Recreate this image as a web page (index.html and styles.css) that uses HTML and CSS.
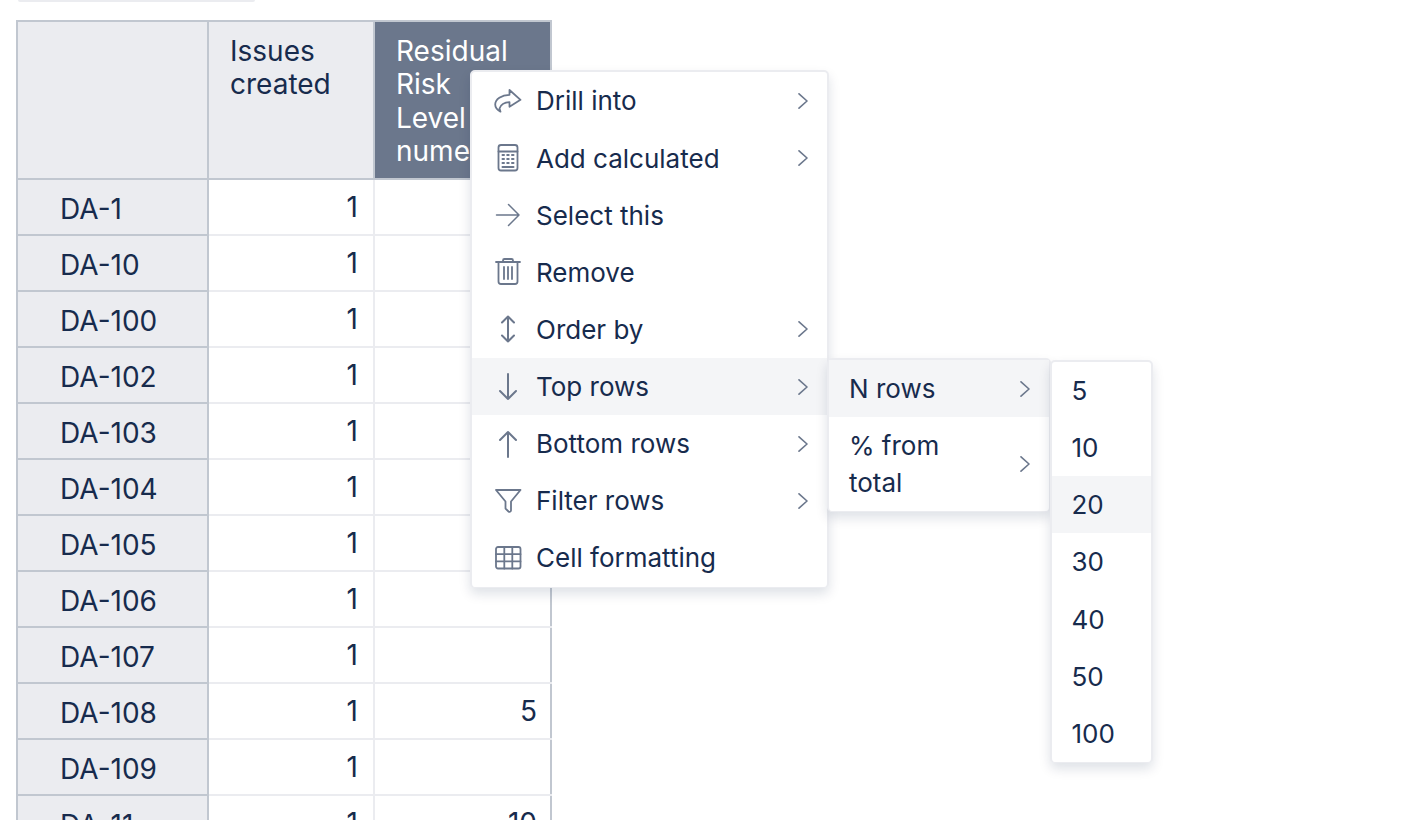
FILE: index.html
```html
<!DOCTYPE html>
<html lang="en">
<head>
<meta charset="utf-8">
<title>Report table</title>
<link rel="stylesheet" href="styles.css">
</head>
<body>
<div class="page">
  <div class="strip"></div>
  <table class="report">
    <colgroup><col class="c-key"><col class="c-issues"><col class="c-risk"></colgroup>
    <thead>
      <tr class="head-row"><th class="corner"></th><th class="col-head">Issues created</th><th class="col-head selected">Residual Risk Level numeric</th></tr>
    </thead>
    <tbody>
      <tr><th class="row-head">DA-1</th><td>1</td><td></td></tr>
      <tr><th class="row-head">DA-10</th><td>1</td><td></td></tr>
      <tr><th class="row-head">DA-100</th><td>1</td><td></td></tr>
      <tr><th class="row-head">DA-102</th><td>1</td><td></td></tr>
      <tr><th class="row-head">DA-103</th><td>1</td><td></td></tr>
      <tr><th class="row-head">DA-104</th><td>1</td><td></td></tr>
      <tr><th class="row-head">DA-105</th><td>1</td><td></td></tr>
      <tr><th class="row-head">DA-106</th><td>1</td><td></td></tr>
      <tr><th class="row-head">DA-107</th><td>1</td><td></td></tr>
      <tr><th class="row-head">DA-108</th><td>1</td><td>5</td></tr>
      <tr><th class="row-head">DA-109</th><td>1</td><td></td></tr>
      <tr><th class="row-head">DA-11</th><td>1</td><td>10</td></tr>
    </tbody>
  </table>

  <ul class="menu menu-main">
    <li class="item"><svg class="icon" viewBox="0 0 32 32"><path d="M17.5 5l11 9.8-11 7v-4.600c-5 .2-8.500 2-10 6.300l1 3.200C5.500 25 3.200 22.500 3.200 19.500c0-5.500 6.300-9.500 14.300-9.700z"/></svg><span class="label">Drill into</span><svg class="chev" viewBox="0 0 10 16"><path d="M1 .8L9 8l-8 7.200"/></svg></li>
    <li class="item"><svg class="icon" viewBox="0 0 32 32"><rect x="6.500" y="3" width="19" height="25.500" rx="2.500"/><path d="M6.500 9.500h19"/><path class="dots" d="M10.500 13h1.500M15.200 13h1.500M20 13h1.500M10.500 17h1.500M15.200 17h1.500M20 17h1.500M10.500 21h1.500M15.200 21h1.500M20 21h1.500M10.500 25h11"/></svg><span class="label">Add calculated</span><svg class="chev" viewBox="0 0 10 16"><path d="M1 .8L9 8l-8 7.200"/></svg></li>
    <li class="item"><svg class="icon icon-thin" viewBox="0 0 32 32"><path d="M4.500 16h22.500M16.500 5.500L27 16 16.500 26.500"/></svg><span class="label">Select this</span></li>
    <li class="item"><svg class="icon" viewBox="0 0 32 32"><path d="M6.500 7v18.500a2.500 2.500 0 0 0 2.500 2.500h14a2.500 2.500 0 0 0 2.500-2.500V7M4 6h24M11 6V4.500A1.500 1.500 0 0 1 12.500 3h7A1.500 1.500 0 0 1 21 4.500V6M12 11v12M16 11v12M20 11v12"/></svg><span class="label">Remove</span></li>
    <li class="item"><svg class="icon icon-bold" viewBox="0 0 32 32"><path d="M16 3.500v25M10 9.500l6-6 6 6M10 22.500l6 6 6-6"/></svg><span class="label">Order by</span><svg class="chev" viewBox="0 0 10 16"><path d="M1 .8L9 8l-8 7.200"/></svg></li>
    <li class="item active"><svg class="icon icon-bold" viewBox="0 0 32 32"><path d="M16 3v25M8 20l8 8 8-8"/></svg><span class="label">Top rows</span><svg class="chev" viewBox="0 0 10 16"><path d="M1 .8L9 8l-8 7.200"/></svg></li>
    <li class="item"><svg class="icon icon-bold" viewBox="0 0 32 32"><path d="M16 29V4M8 12l8-8 8 8"/></svg><span class="label">Bottom rows</span><svg class="chev" viewBox="0 0 10 16"><path d="M1 .8L9 8l-8 7.200"/></svg></li>
    <li class="item"><svg class="icon" viewBox="0 0 32 32"><path d="M4 5h24.500L19 16.500v9a1.500 1.500 0 0 1-2.500 1L13.500 23.500v-7z"/></svg><span class="label">Filter rows</span><svg class="chev" viewBox="0 0 10 16"><path d="M1 .8L9 8l-8 7.200"/></svg></li>
    <li class="item"><svg class="icon" viewBox="0 0 32 32"><rect x="4" y="5" width="24.500" height="21.500" rx="2"/><path d="M12.300 5v21.500M20.300 5v21.500M4 12.200h24.500M4 19.400h24.500"/></svg><span class="label">Cell formatting</span></li>
  </ul>

  <ul class="menu menu-sub">
    <li class="item active"><span class="label">N rows</span><svg class="chev" viewBox="0 0 10 16"><path d="M1 .8L9 8l-8 7.200"/></svg></li>
    <li class="item"><span class="label wrap">% from total</span><svg class="chev" viewBox="0 0 10 16"><path d="M1 .8L9 8l-8 7.200"/></svg></li>
  </ul>

  <ul class="menu menu-count">
    <li class="item"><span class="label">5</span></li>
    <li class="item"><span class="label">10</span></li>
    <li class="item active"><span class="label">20</span></li>
    <li class="item"><span class="label">30</span></li>
    <li class="item"><span class="label">40</span></li>
    <li class="item"><span class="label">50</span></li>
    <li class="item"><span class="label">100</span></li>
  </ul>
</div>
</body>
</html>
```
FILE: styles.css
```css
html, body {
  margin: 0;
  padding: 0;
  height: 820px;
  overflow: hidden;
  background: #fff;
}

.page {
  position: relative;
  height: 820px;
  overflow: hidden;
  padding-left: 16px;
  font-family: Inter, "Liberation Sans", sans-serif;
  color: #172b4d;
}

.strip {
  width: 237px;
  height: 2px;
  margin-left: 2px;
  background: #ebecf0;
  border-radius: 0 0 5px 5px;
}

.report {
  margin-top: 18px;
  width: 534px;
  table-layout: fixed;
  border-collapse: collapse;
  border: 2px solid #c1c7d0;
  font-size: 28px;
  line-height: 33.6px;
}

.c-key { width: 191px; }
.c-issues { width: 166px; }
.c-risk { width: 177px; }

.report th { font-weight: 400; text-align: left; }

.head-row { height: 158px; }

.corner, .col-head, .row-head {
  background: #ebecf0;
  border: 2px solid #c1c7d0;
}

.col-head {
  vertical-align: top;
  padding: 12.6px 30px 0 21px;
}

.col-head.selected {
  background: #6b778c;
  color: #fff;
}

.report tbody tr { height: 56px; }

.row-head {
  padding: 6px 0 0 42px;
}

.report td {
  text-align: right;
  padding: 2px 15px 0 0;
  border: 2px solid #ebecf0;
}

.report td:last-child {
  border-right-color: #c1c7d0;
  padding-right: 13px;
}

.menu {
  position: absolute;
  box-sizing: border-box;
  margin: 0;
  padding: 0;
  list-style: none;
  background: #fff;
  border: 2px solid #ebecf0;
  border-bottom-width: 1px;
  border-radius: 5px;
  box-shadow: 0 6px 12px rgba(9, 30, 66, 0.13);
  font-size: 26px;
  line-height: 37.14px;
}

.menu-main { left: 470px; top: 70.37px; width: 359px; }
.menu-sub { left: 827px; top: 358px; width: 224px; }
.menu-count { left: 1050px; top: 360px; width: 103px; }

.item {
  display: flex;
  align-items: center;
  padding: 10px 19px 10px 20px;
}

.item.active { background: #f4f5f7; }

.menu-count .item { padding-left: 19.5px; }

.label { flex: 1; }

.label.wrap { flex: none; width: 120px; margin-right: auto; }

.icon {
  width: 32px;
  height: 32px;
  flex: none;
  margin-right: 12px;
  fill: none;
  stroke: #6b778c;
  stroke-width: 1.8;
  stroke-linejoin: round;
  stroke-linecap: round;
}

.icon-thin { stroke-width: 1.5; }

.icon-bold { stroke-width: 2; }

.dots { stroke-width: 2; }

.chev {
  width: 10px;
  height: 16px;
  flex: none;
  fill: none;
  stroke: #6b778c;
  stroke-width: 1.6;
  stroke-linecap: round;
  stroke-linejoin: round;
}
```
